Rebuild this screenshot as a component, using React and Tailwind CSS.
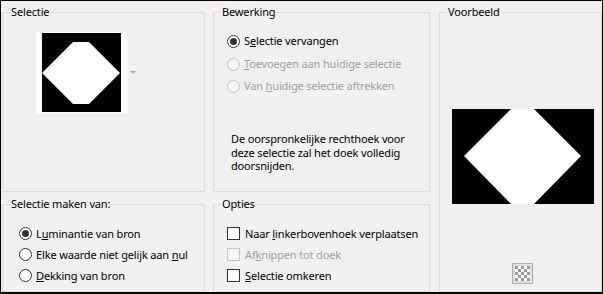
import React from 'react';

const font = { fontFamily: '"Noto Sans", "DejaVu Sans", sans-serif' };

function Radio({ checked, disabled, children }) {
  return (
    <div className="flex items-center h-[21px] whitespace-nowrap">
      <span
        className={
          disabled
            ? 'w-[13px] h-[13px] rounded-full border border-[#c4c4c4] bg-[#f4f4f4] flex items-center justify-center'
            : 'w-[13px] h-[13px] rounded-full border border-[#333333] bg-white flex items-center justify-center'
        }
      >
        {checked && <span className="w-[7px] h-[7px] rounded-full bg-[#333333]" />}
      </span>
      <span className={disabled ? 'ml-[4px] text-[#a0a0a0]' : 'ml-[4px] text-black'}>{children}</span>
    </div>
  );
}

function Check({ disabled, children }) {
  return (
    <div className="flex items-center h-[21px] whitespace-nowrap">
      <span
        className={
          disabled
            ? 'w-[13px] h-[13px] border border-[#c4c4c4] bg-[#f4f4f4]'
            : 'w-[13px] h-[13px] border border-[#333333] bg-white'
        }
      />
      <span className={disabled ? 'ml-[5px] text-[#a0a0a0]' : 'ml-[5px] text-black'}>{children}</span>
    </div>
  );
}

function Group({ title, className, children }) {
  return (
    <fieldset className={'border border-[#dcdcdc] m-0 p-0 min-w-0 ' + className}>
      <legend className="ml-[7px] px-[1px] leading-[16px] text-black whitespace-nowrap">{title}</legend>
      {children}
    </fieldset>
  );
}

function Checker() {
  const cells = [];
  for (let r = 0; r < 5; r++) {
    for (let c = 0; c < 5; c++) {
      if ((r + c) % 2 === 0) cells.push(<rect key={r + '-' + c} x={c * 3} y={r * 3} width="3" height="3" fill="#9a9a9a" />);
    }
  }
  return (
    <div className="w-[21px] h-[21px] border border-[#adadad] bg-[#e1e1e1] flex items-center justify-center">
      <svg width="15" height="15" viewBox="0 0 15 15">
        <rect width="15" height="15" fill="#ffffff" />
        {cells}
      </svg>
    </div>
  );
}

export default function App() {
  return (
    <div
      className="w-[603px] h-[294px] bg-[#f0f0f0] border-t border-l border-r border-b-2 border-black text-[11px] tracking-[-0.15px] flex pl-[1px] pt-[3px]"
      style={font}
    >
      <div className="w-[203px] flex flex-col">
        <Group title="Selectie" className="h-[189px]">
          <div className="flex items-center mt-[12px] ml-[33px]">
            <div className="w-[91px] h-[81px] bg-white flex items-center justify-center">
              <svg width="79" height="79" viewBox="0 0 79 79">
                <rect width="79" height="79" fill="#000" />
                <polygon points="31,9 47,9 78,40 47,71 31,71 0,40" fill="#fff" />
              </svg>
            </div>
            <svg className="ml-[3px]" width="6" height="4" viewBox="0 0 6 4">
              <polygon points="0,0 6,0 3,3" fill="#a8a8a8" />
            </svg>
          </div>
        </Group>
        <Group title="Selectie maken van:" className="h-[96px] mt-[4px]">
          <div className="mt-[11px] ml-[16px]">
            <Radio checked>
              L<u>u</u>minantie van bron
            </Radio>
            <Radio>
              Elke waarde niet gelijk aan <u>n</u>ul
            </Radio>
            <Radio>
              <u>D</u>ekking van bron
            </Radio>
          </div>
        </Group>
      </div>

      <div className="w-[217px] ml-[8px] flex flex-col">
        <Group title="Bewerking" className="h-[189px]">
          <div className="mt-[11px] ml-[13px] flex flex-col gap-[1.5px]">
            <Radio checked>
              S<u>e</u>lectie vervangen
            </Radio>
            <Radio disabled>
              <u>T</u>oevoegen aan huidige selectie
            </Radio>
            <Radio disabled>
              Van <u>h</u>uidige selectie aftrekken
            </Radio>
          </div>
          <p className="mt-[35px] ml-[17px] leading-[13.5px] text-black whitespace-nowrap">
            De oorspronkelijke rechthoek voor
            <br />
            deze selectie zal het doek volledig
            <br />
            doorsnijden.
          </p>
        </Group>
        <Group title="Opties" className="h-[96px] mt-[4px]">
          <div className="mt-[11px] ml-[13px]">
            <Check>
              Naar <u>l</u>inkerbovenhoek verplaatsen
            </Check>
            <Check disabled>
              Af<u>k</u>nippen tot doek
            </Check>
            <Check>
              <u>S</u>electie omkeren
            </Check>
          </div>
        </Group>
      </div>

      <div className="w-[163px] ml-[9px]">
        <Group title="Voorbeeld" className="h-[288px]">
          <div className="mt-[89px] ml-[12px]">
            <svg width="142" height="95" viewBox="0 0 142 95" className="block">
              <rect width="142" height="95" fill="#000" />
              <polygon points="59,0 82,0 129,47 82,95 59,95 12,47" fill="#fff" />
            </svg>
          </div>
          <div className="mt-[59px] ml-[72px]">
            <Checker />
          </div>
        </Group>
      </div>
    </div>
  );
}
